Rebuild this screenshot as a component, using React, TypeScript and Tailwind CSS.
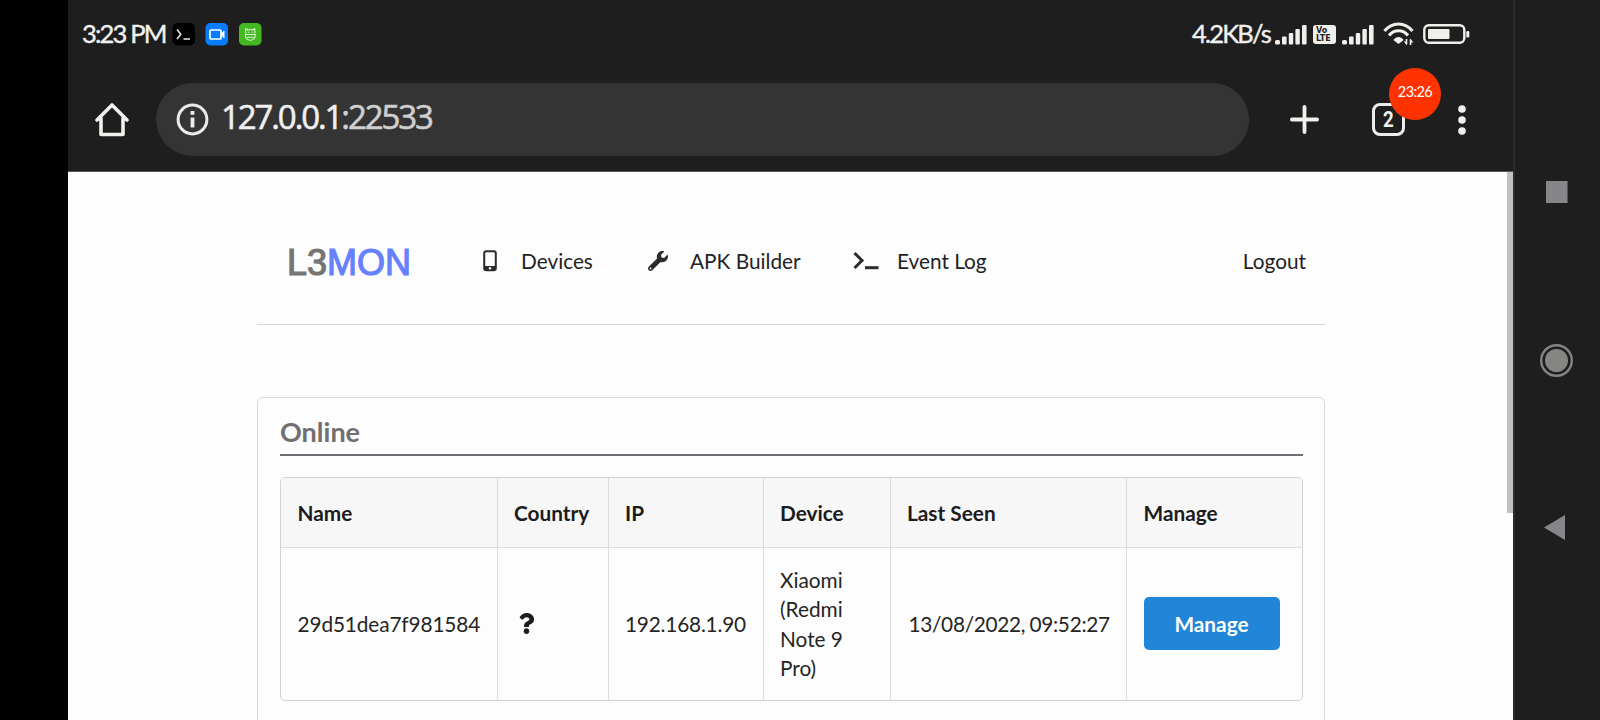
import React from "react";
import { FaQuestion, FaWrench } from "react-icons/fa";

function Signal() {
  return (
    <svg className="h-[22px] w-[32px]" viewBox="0 0 32 22" fill="#efefeb">
      <rect x="0" y="16" width="5" height="4.5" rx="1.5" />
      <rect x="7" y="12.5" width="4.6" height="8" rx="1" />
      <rect x="13.8" y="9" width="4.4" height="11.5" rx="1" />
      <rect x="20.4" y="5" width="4.4" height="15.5" rx="1" />
      <rect x="27" y="1" width="4.6" height="19.5" rx="1" />
    </svg>
  );
}

function StatusBar() {
  return (
    <div className="flex h-[83px] items-start pt-[22px] pl-[14px] text-[#f0f0ee]">
      <span className="w-[90px] whitespace-nowrap font-[Lato] text-[25.5px] leading-[22px] tracking-[-1.8px] [-webkit-text-stroke:0.4px_#f0f0ee]">3:23 PM</span>
      <svg className="mt-px h-[23px] w-[90px]" viewBox="0 0 90 23" fill="none">
        <rect x="0.5" y="0" width="22.5" height="22.5" rx="5" fill="#000" />
        <path d="M5 6.5 L8.8 11.2 L5 16 M11.5 16 H18" stroke="#eee" strokeWidth="1.5" />
        <rect x="33.5" y="0" width="22.5" height="22.5" rx="5" fill="#0a7cff" />
        <rect x="38" y="7" width="11" height="9" rx="1" stroke="#fff" strokeWidth="1.7" />
        <path d="M49 11.5 L52 8 V15 Z" fill="#fff" stroke="#fff" />
        <rect x="67" y="0" width="22.5" height="22.5" rx="5" fill="#43b823" />
        <path d="M73.8 10.5 C73.8 8.5 73.3 7 74 5.5 L76 7 C77 6.6 79.6 6.6 80.6 7 L82.6 5.5 C83.3 7 82.8 8.5 82.8 10.5 M72.8 11.5 H83.8 M73.3 12 C73 19 83.6 19 83.3 12 M75 14.3 H81.6" stroke="#d9f5cf" strokeWidth="1.1" />
        <path d="M75.8 9.2 H77.2 M79.4 9.2 H80.8" stroke="#d9f5cf" />
      </svg>
      <div className="ml-auto flex pr-[43px]">
        <span className="w-[83px] whitespace-nowrap font-[Lato] text-[25.5px] leading-[22px] tracking-[-1.8px] [-webkit-text-stroke:0.4px_#f0f0ee]">4.2KB/s</span>
        <div className="mt-[2px]"><Signal /></div>
        <div className="mt-[3px] ml-[6px] flex h-[19px] w-[23px] flex-col items-start justify-center rounded-[3px] bg-[#efefeb] pl-[3px] font-['DejaVu_Sans'] text-[8px] leading-[8px] font-bold text-[#222]">
          <span>Vo</span>
          <span>LTE</span>
        </div>
        <div className="mt-[2px] ml-[6px]"><Signal /></div>
        <svg className="ml-[9px] h-[24px] w-[31px]" viewBox="0 0 31 24" fill="none" stroke="#efefeb" strokeWidth="3">
          <path d="M1.5 9 C9 -0.5 22 -0.5 29.5 9" />
          <path d="M6 13.5 C11 7 20 7 25 13.5" />
          <path d="M10.3 18 C13.5 14 17.5 14 20.7 18 L15.5 22 Z" fill="#efefeb" stroke="none" />
          <path d="M23.5 17 V22 M27.5 23 V17.5" strokeWidth="1.6" />
          <path d="M20.8 19.5 L24 23.5 V19.5 Z M27 16.5 V20.5 H30.5 Z" fill="#efefeb" stroke="none" />
        </svg>
        <svg className="ml-[9px] mt-[1px] h-[22px] w-[47px]" viewBox="0 0 47 22" fill="none">
          <rect x="1.3" y="2.2" width="40" height="17.6" rx="4.5" stroke="#efefeb" strokeWidth="2.4" />
          <rect x="5" y="6" width="21.5" height="10" rx="1" fill="#efefeb" />
          <rect x="43.3" y="8" width="3" height="6.5" rx="1.2" fill="#efefeb" />
        </svg>
      </div>
    </div>
  );
}

function AddressBar() {
  return (
    <div className="flex h-[73px] items-center">
      <svg className="ml-[27px] h-[34px] w-[34px]" viewBox="0 0 34 34" fill="none" stroke="#f0f0ec" strokeWidth="3.6" strokeLinejoin="round" strokeLinecap="round">
        <path d="M2 17 L17 2 L32 17 M6 15 V31.5 H28 V15" />
      </svg>
      <div className="ml-[27px] flex h-[73px] w-[1093px] items-center rounded-full bg-[#343434] pl-[20px]">
        <svg className="h-[33px] w-[33px]" viewBox="0 0 33 33" fill="none" stroke="#ebebeb" strokeWidth="3">
          <circle cx="16.5" cy="16.5" r="14.4" />
          <path d="M16.5 14.5 V24.5 M16.5 8 V11.8" strokeWidth="3.8" />
        </svg>
        <span className="ml-[12px] -mt-[5px] whitespace-nowrap font-['Open_Sans'] text-[33px] leading-[40px] tracking-[-2.1px] text-[#f0f0f0] [-webkit-text-stroke:0.6px_currentColor]">
          127.0.0.1<span className="text-[#cfcfd0]">:22533</span>
        </span>
      </div>
      <svg className="ml-[41px] h-[29px] w-[29px]" viewBox="0 0 29 29" stroke="#f0f0ec" strokeWidth="3.8" strokeLinecap="round">
        <path d="M14.5 1.9 V27.1 M1.9 14.5 H27.1" />
      </svg>
      <div className="relative ml-[53px] flex h-[33px] w-[33px] items-center justify-center rounded-[8px] border-[3.5px] border-[#ededeb] font-[Roboto] text-[22px] leading-none font-bold text-[#efefeb]">
        <span className="scale-x-[0.85]">2</span>
        <div className="absolute -top-[38px] left-[14px] flex h-[52px] w-[52px] items-center justify-center rounded-full bg-[#ff3300] pb-[4px] font-[Lato] text-[14.5px] font-normal tracking-[-0.6px] text-white">23:26</div>
      </div>
      <svg className="ml-[53px] h-[30px] w-[8px]" viewBox="0 0 8 30" fill="#efefeb">
        <circle cx="4" cy="4" r="3.8" />
        <circle cx="4" cy="15" r="3.8" />
        <circle cx="4" cy="26" r="3.8" />
      </svg>
    </div>
  );
}

function NavBar() {
  return (
    <nav className="flex h-[153px] items-center border-b border-[#d3d3d0] pt-[26px] pl-[30px] text-[20.8px] text-[#222]">
      <div className="mt-[3px] w-[196px] whitespace-nowrap font-['Liberation_Sans'] text-[36px] leading-[40px] text-[#757575] [-webkit-text-stroke:1.2px_currentColor]">
        L3<span className="text-[#6680ff]">MON</span>
      </div>
      <svg className="h-[22px] w-[14px]" viewBox="0 0 14 22" fill="none">
        <rect x="1.2" y="1.2" width="11.6" height="19" rx="2" stroke="#2b2b2b" strokeWidth="2" />
        <path d="M1 16 H13 V20 H1 Z" fill="#2b2b2b" />
        <circle cx="7" cy="18.2" r="1.2" fill="#fff" />
      </svg>
      <span className="ml-[24px] w-[127px]">Devices</span>
      <FaWrench className="h-[20px] w-[20px]" color="#2b2b2b" />
      <span className="ml-[22px] w-[163px]">APK Builder</span>
      <svg className="h-[20px] w-[26px]" viewBox="0 0 26 20" fill="none" stroke="#2b2b2b" strokeWidth="3">
        <path d="M1.5 2 L9 9.5 L1.5 17" />
        <path d="M12 16.7 H25.5" />
      </svg>
      <span className="ml-[18px]">Event Log</span>
      <span className="mr-[19px] ml-auto">Logout</span>
    </nav>
  );
}

const cell = "border-r border-[#dcdcdc] px-[16.5px]";

function DeviceTable() {
  return (
    <div className="mt-[21px] -mr-px overflow-hidden rounded-[5px] border border-[#d2d2d4]">
      <table className="h-[222px] w-full table-fixed border-collapse text-left text-[20.8px] leading-[29.4px] text-[#252525]">
        <colgroup>
          <col className="w-[216px]" />
          <col className="w-[111px]" />
          <col className="w-[155px]" />
          <col className="w-[127px]" />
          <col className="w-[236px]" />
          <col />
        </colgroup>
        <thead>
          <tr className="h-[69px] border-b border-[#dedede] bg-[#f7f7f8] text-[#1c1c1c]">
            <th className={cell}>Name</th>
            <th className={cell}>Country</th>
            <th className={cell}>IP</th>
            <th className={cell}>Device</th>
            <th className={cell}>Last Seen</th>
            <th className="px-[17px]">Manage</th>
          </tr>
        </thead>
        <tbody>
          <tr>
            <td className={cell}><span className="tracking-[-0.12px]">29d51dea7f981584</span></td>
            <td className={cell}><FaQuestion className="ml-[2px] h-[21px] w-[21px]" color="#1c1c1c" /></td>
            <td className={cell}><span className="tracking-[-0.2px]">192.168.1.90</span></td>
            <td className={cell}>Xiaomi (Redmi Note 9 Pro)</td>
            <td className="border-r border-[#dcdcdc] pl-[18px] whitespace-nowrap"><span className="tracking-[-0.3px] [word-spacing:-0.8px]">13/08/2022, 09:52:27</span></td>
            <td className="px-[17px]">
              <button className="block h-[53px] w-[136px] rounded-[5px] bg-[#2185d8] font-bold text-white">Manage</button>
            </td>
          </tr>
        </tbody>
      </table>
    </div>
  );
}

function SystemNavigation() {
  return (
    <aside className="w-[87px] border-l-2 border-[#2d2d26] bg-[#1e1e1e]">
      <svg className="mt-[180px] ml-[25px] h-[364px] w-[34px]" viewBox="0 0 34 364">
        <rect x="6" y="1" width="21.5" height="22" fill="#85858a" />
        <circle cx="16.5" cy="180.5" r="15.3" fill="none" stroke="#858584" strokeWidth="2.4" />
        <circle cx="16.5" cy="180.5" r="11.5" fill="#858584" />
        <path d="M4 347.5 L25 335 V360 Z" fill="#85858a" />
      </svg>
    </aside>
  );
}

export default function App() {
  return (
    <div className="flex h-[720px] w-[1600px] overflow-hidden bg-black font-[Lato,sans-serif]">
      <div className="ml-[68px] flex w-[1445px] flex-col">
        <header className="h-[172px] shrink-0 border-b border-[#55555f] bg-[#1e1e1e]">
          <StatusBar />
          <AddressBar />
        </header>
        <div className="flex min-h-0 flex-1 bg-[#fdfdfd]">
          <main className="ml-[189px] w-[1068px]">
            <NavBar />
            <section className="mt-[72px] h-[400px] rounded-[6px] border border-[#d8d8d8] px-[22px] pt-[14px]">
              <h2 className="-mr-px h-[44px] border-b-2 border-[#6e6e76] text-[27px] leading-[40px] font-bold text-[#707070]">Online</h2>
              <DeviceTable />
            </section>
          </main>
          <div className="ml-auto h-[341px] w-[6px] bg-[#c0c0c3]" />
        </div>
      </div>
      <SystemNavigation />
    </div>
  );
}
